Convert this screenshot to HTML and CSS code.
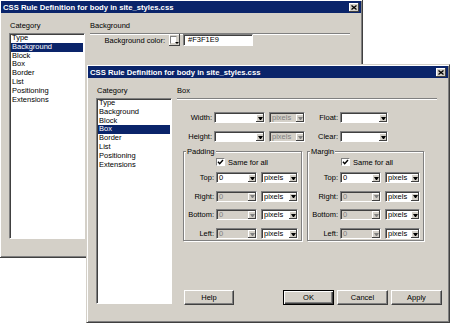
FILE: index.html
```html
<!DOCTYPE html>
<html lang="en">

<head>
  <meta charset="UTF-8" />
  <title>CSS Rule Definition</title>
  <link rel="stylesheet" href="styles.css">
</head>

<body>
  <!-- back dialog: Background page -->
  <div class="dialog back">
    <div class="titlebar">
      <span>CSS Rule Definition for body in site_styles.css</span>
      <span class="close"><svg width="6" height="5" viewBox="0 0 6 5"><path d="M0.5 0.5L5.5 4.5M5.5 0.5L0.5 4.5" stroke="#000" stroke-width="1.3"/></svg></span>
    </div>
    <div class="dlg-body">
      <div class="cat">
        <div class="cat-label">Category</div>
        <ul class="cat-list">
          <li>Type</li>
          <li class="active">Background</li>
          <li>Block</li>
          <li>Box</li>
          <li>Border</li>
          <li>List</li>
          <li>Positioning</li>
          <li>Extensions</li>
        </ul>
      </div>
      <div class="pane">
        <div class="pane-head">Background</div>
        <div class="row bg-row">
          <span class="lbl lbl-bg">Background color:</span>
          <span class="swatch"><span class="swatch-box"></span><span class="swatch-arrow"></span></span>
          <span class="field">#F3F1E9</span>
        </div>
      </div>
    </div>
  </div>

  <!-- front dialog: Box page -->
  <div class="dialog front">
    <div class="titlebar">
      <span>CSS Rule Definition for body in site_styles.css</span>
      <span class="close"><svg width="6" height="5" viewBox="0 0 6 5"><path d="M0.5 0.5L5.5 4.5M5.5 0.5L0.5 4.5" stroke="#000" stroke-width="1.3"/></svg></span>
    </div>
    <div class="dlg-body">
      <div class="cat">
        <div class="cat-label">Category</div>
        <ul class="cat-list">
          <li>Type</li>
          <li>Background</li>
          <li>Block</li>
          <li class="active">Box</li>
          <li>Border</li>
          <li>List</li>
          <li>Positioning</li>
          <li>Extensions</li>
        </ul>
      </div>
      <div class="pane">
        <div class="pane-head">Box</div>

        <div class="row size-row">
          <span class="lbl lbl-size">Width:</span>
          <span class="combo c-size"><span class="val"></span><span class="arrow"></span></span>
          <span class="combo c-unit off"><span class="val">pixels</span><span class="arrow"></span></span>
          <span class="lbl lbl-float">Float:</span>
          <span class="combo c-float"><span class="val"></span><span class="arrow"></span></span>
        </div>
        <div class="row size-row second">
          <span class="lbl lbl-size">Height:</span>
          <span class="combo c-size"><span class="val"></span><span class="arrow"></span></span>
          <span class="combo c-unit off"><span class="val">pixels</span><span class="arrow"></span></span>
          <span class="lbl lbl-float">Clear:</span>
          <span class="combo c-float"><span class="val"></span><span class="arrow"></span></span>
        </div>

        <div class="groups">
          <div class="group group-pad">
            <div class="group-title">Padding</div>
            <div class="check-row">
              <span class="check"><svg width="7" height="6" viewBox="0 0 7 6"><path d="M1 2.8L2.7 4.8L6 1" fill="none" stroke="#000" stroke-width="1.4"/></svg></span>
              Same for all
            </div>
            <div class="row box-row">
              <span class="lbl lbl-box">Top:</span>
              <span class="combo c-box"><span class="val">0</span><span class="arrow"></span></span>
              <span class="combo c-boxunit"><span class="val">pixels</span><span class="arrow"></span></span>
            </div>
            <div class="row box-row">
              <span class="lbl lbl-box">Right:</span>
              <span class="combo c-box off"><span class="val">0</span><span class="arrow"></span></span>
              <span class="combo c-boxunit"><span class="val">pixels</span><span class="arrow"></span></span>
            </div>
            <div class="row box-row">
              <span class="lbl lbl-box">Bottom:</span>
              <span class="combo c-box off"><span class="val">0</span><span class="arrow"></span></span>
              <span class="combo c-boxunit"><span class="val">pixels</span><span class="arrow"></span></span>
            </div>
            <div class="row box-row">
              <span class="lbl lbl-box">Left:</span>
              <span class="combo c-box off"><span class="val">0</span><span class="arrow"></span></span>
              <span class="combo c-boxunit"><span class="val">pixels</span><span class="arrow"></span></span>
            </div>
          </div>

          <div class="group group-margin">
            <div class="group-title">Margin</div>
            <div class="check-row">
              <span class="check"><svg width="7" height="6" viewBox="0 0 7 6"><path d="M1 2.8L2.7 4.8L6 1" fill="none" stroke="#000" stroke-width="1.4"/></svg></span>
              Same for all
            </div>
            <div class="row box-row">
              <span class="lbl lbl-box">Top:</span>
              <span class="combo c-box"><span class="val">0</span><span class="arrow"></span></span>
              <span class="combo c-boxunit"><span class="val">pixels</span><span class="arrow"></span></span>
            </div>
            <div class="row box-row">
              <span class="lbl lbl-box">Right:</span>
              <span class="combo c-box off"><span class="val">0</span><span class="arrow"></span></span>
              <span class="combo c-boxunit"><span class="val">pixels</span><span class="arrow"></span></span>
            </div>
            <div class="row box-row">
              <span class="lbl lbl-box">Bottom:</span>
              <span class="combo c-box off"><span class="val">0</span><span class="arrow"></span></span>
              <span class="combo c-boxunit"><span class="val">pixels</span><span class="arrow"></span></span>
            </div>
            <div class="row box-row">
              <span class="lbl lbl-box">Left:</span>
              <span class="combo c-box off"><span class="val">0</span><span class="arrow"></span></span>
              <span class="combo c-boxunit"><span class="val">pixels</span><span class="arrow"></span></span>
            </div>
          </div>
        </div>

        <div class="footer">
          <span class="btn help">Help</span>
          <span class="btn default">OK</span>
          <span class="btn">Cancel</span>
          <span class="btn">Apply</span>
        </div>
      </div>
    </div>
  </div>
</body>

</html>
```

FILE: styles.css
```css
* {
  box-sizing: border-box;
}

body {
  margin: 0;
  width: 450px;
  height: 323px;
  position: relative;
  overflow: hidden;
  background: #fff;
  font-family: "Liberation Sans", Arial, sans-serif;
  font-size: 7.5px;
  color: #000;
}

/* window frame */
.dialog {
  position: absolute;
  width: 364px;
  height: 259px;
  padding: 1px;
  background: #d4d0c8;
  border: 1px solid;
  border-color: #d4d0c8 #404040 #404040 #d4d0c8;
  box-shadow: inset 1px 1px #fff, inset -1px -1px #808080;
  display: flex;
  flex-direction: column;
}

.back {
  left: -1px;
  top: -1px;
}

.front {
  left: 86px;
  top: 64px;
}

.titlebar {
  height: 12px;
  padding: 0 2px;
  background: #0a246a;
  color: #fff;
  font-weight: bold;
  font-size: 7.7px;
  display: flex;
  align-items: center;
  justify-content: space-between;
}

.close {
  width: 10px;
  height: 9px;
  background: #d4d0c8;
  box-shadow: inset -1px -1px #404040, inset 1px 1px #fff;
  display: flex;
  align-items: center;
  justify-content: center;
}

.dlg-body {
  flex: 1;
  display: flex;
  gap: 5px;
  padding: 0 6px 0 8px;
}

/* category list */
.cat {
  width: 76px;
  display: flex;
  flex-direction: column;
}

.cat-label {
  padding: 8px 0 0 1px;
  line-height: 10px;
}

.cat-list {
  list-style: none;
  margin: 2px 0 0;
  padding: 0 1px;
  height: 206px;
  background: #fff;
  border: 1px solid;
  border-color: #808080 #fff #fff #808080;
  box-shadow: inset 1px 1px #404040;
}

.cat-list li {
  line-height: 8.8px;
  padding-left: 1px;
}

.cat-list .active {
  background: #0a246a;
  color: #fff;
}

/* right pane */
.pane {
  flex: 1;
  display: flex;
  flex-direction: column;
}

.pane-head {
  padding: 8px 0 2px;
  line-height: 10px;
  margin-right: 5px;
  border-bottom: 1px solid #808080;
  box-shadow: 0 1px #fff;
}

.row {
  display: flex;
  align-items: center;
  height: 11px;
}

.lbl {
  text-align: right;
  margin-right: 2px;
  white-space: nowrap;
}

.size-row {
  margin-top: 13px;
}

.size-row.second {
  margin-top: 8px;
}

.lbl-size {
  width: 35px;
}

.lbl-float {
  width: 31px;
}

.lbl-box {
  width: 30px;
}

/* combo boxes */
.combo {
  height: 11px;
  display: flex;
  padding: 1px 0 0 1px;
  background: #fff;
  border: 1px solid;
  border-color: #808080 #fff #fff #808080;
  box-shadow: inset 1px 1px #404040;
}

.combo .val {
  flex: 1;
  padding-left: 1px;
  line-height: 8px;
  overflow: hidden;
  white-space: nowrap;
}

.combo .arrow {
  width: 8px;
  background: #d4d0c8;
  box-shadow: inset -1px -1px #404040, inset 1px 1px #fff;
  display: flex;
  align-items: center;
  justify-content: center;
}

.combo .arrow::after {
  content: "";
  width: 1px;
  height: 0;
  border-left: 2px solid transparent;
  border-right: 2px solid transparent;
  border-top: 3px solid #000;
}

.combo.off {
  background: #d4d0c8;
  color: #808080;
}

.combo.off .arrow::after {
  border-top-color: #808080;
}

.c-size {
  width: 51px;
}

.c-unit {
  width: 36px;
  margin: 0 2px 0 4px;
}

.c-float {
  width: 48px;
}

.c-box {
  width: 41px;
}

.c-boxunit {
  width: 37px;
  margin-left: 4px;
}

.group-margin .c-boxunit {
  width: 35px;
}

/* group boxes */
.groups {
  display: flex;
  gap: 5px;
  margin: 9px 0 0 6px;
}

.group {
  border: 1px solid #808080;
  box-shadow: 1px 1px #fff, inset 1px 1px #fff;
  padding-bottom: 1px;
}

.group-pad {
  width: 119px;
}

.group-margin {
  width: 117px;
}

.group-title {
  width: fit-content;
  margin: -5px 0 0 2px;
  padding: 0 1px;
  line-height: 9px;
  background: #d4d0c8;
}

.check-row {
  display: flex;
  align-items: center;
  gap: 3px;
  height: 8px;
  margin-top: 2px;
  padding-left: 32px;
}

.group-margin .check-row {
  padding-left: 33px;
}

.check {
  width: 9px;
  height: 8px;
  background: #fff;
  border: 1px solid;
  border-color: #808080 #fff #fff #808080;
  display: flex;
  align-items: center;
  justify-content: center;
}

.box-row {
  margin-top: 7.7px;
}

.check-row + .box-row {
  margin-top: 6px;
}

/* back dialog colour row */
.bg-row {
  height: 12px;
}

.lbl-bg {
  width: 75px;
  margin-right: 4px;
}

.swatch {
  width: 11px;
  height: 12px;
  margin-right: 3px;
  position: relative;
  background: #d4d0c8;
  box-shadow: inset -1px -1px #404040, inset 1px 1px #fff;
}

.swatch-box {
  display: block;
  width: 7px;
  height: 8px;
  margin: 2px 0 0 1px;
  background: #fff;
  border: 1px solid;
  border-color: #808080 #d4d0c8 #d4d0c8 #808080;
}

.swatch-arrow {
  position: absolute;
  right: 1px;
  bottom: 2px;
  border-left: 2px solid transparent;
  border-right: 2px solid transparent;
  border-top: 2px solid #000;
}

.field {
  width: 70px;
  height: 12px;
  padding-left: 4px;
  line-height: 10px;
  background: #fff;
  border: 1px solid;
  border-color: #808080 #fff #fff #808080;
  box-shadow: inset 1px 1px #404040;
}

/* buttons */
.footer {
  display: flex;
  gap: 3px;
  margin-top: 49px;
  padding-left: 7px;
}

.btn {
  width: 51px;
  height: 15px;
  line-height: 13px;
  text-align: center;
  background: #d4d0c8;
  border: 1px solid;
  border-color: #fff #404040 #404040 #fff;
  box-shadow: inset -1px -1px #808080;
}

.btn.help {
  width: 50px;
  margin-right: auto;
}

.btn.default {
  border-color: #000;
  box-shadow: inset 1px 1px #fff, inset -1px -1px #404040, inset -2px -2px #808080;
}
```
